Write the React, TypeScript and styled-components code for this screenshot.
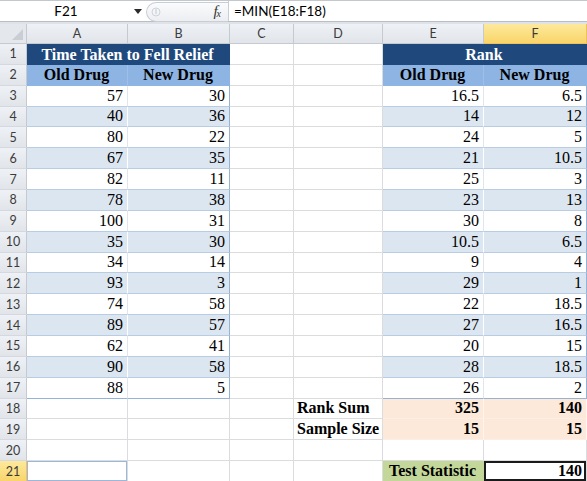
import React from "react";
import styled, { createGlobalStyle, css } from "styled-components";

const GlobalStyle = createGlobalStyle`
  html, body { margin: 0; padding: 0; background: #ffffff; }
  body { width: 587px; height: 481px; overflow: hidden; }
`;

const Page = styled.div`
  width: 587px;
  height: 481px;
  overflow: hidden;
  background: #dfe3e8;
  display: flex;
  flex-direction: column;
`;

const FormulaBar = styled.div`
  display: flex;
  align-items: stretch;
  height: 20px;
  border-top: 1px solid #c3c8cf;
  border-bottom: 1px solid #b7bec8;
  background: #ffffff;
  font-family: Lato, "Liberation Sans", sans-serif;
  font-size: 13.5px;
  color: #000;
  flex: none;
`;

const NameBox = styled.div`
  width: 128px;
  display: flex;
  align-items: center;
  justify-content: center;
  padding-left: 2px;
`;

const DropButton = styled.div`
  width: 16px;
  display: flex;
  align-items: center;
  justify-content: center;
`;

const FxTray = styled.div`
  width: 82px;
  display: flex;
  align-items: center;
  background: #ffffff;
`;

const Pill = styled.div`
  flex: 1;
  height: 18px;
  margin-top: 1px;
  border: 1px solid #c9ced5;
  border-right: none;
  border-radius: 10px 0 0 10px;
  background: linear-gradient(#fafbfc, #eceef2);
  display: flex;
  align-items: center;
  justify-content: space-between;
  padding: 0 8px 0 4px;
`;

const Fx = styled.span`
  font-family: "Liberation Serif", serif;
  font-style: italic;
  font-size: 15px;
  color: #333;
  letter-spacing: -1px;
  sub {
    font-size: 10px;
    vertical-align: -1px;
  }
`;

const FormulaText = styled.div`
  flex: 1;
  display: flex;
  align-items: center;
  padding-left: 5px;
  border-left: 1px solid #c9ced5;
`;

const Gap = styled.div`
  height: 2px;
  flex: none;
  background: #dfe3e8;
`;

const Sheet = styled.div`
  display: grid;
  grid-template-columns: 27px 101px 102px 64px 89px 101px 103px;
  grid-template-rows: 20px;
  grid-auto-rows: 20.86px;
  background: #ffffff;
  flex: none;
`;

const headFill = css<{ $active?: boolean }>`
  background: ${(p) =>
    p.$active
      ? "linear-gradient(#fde99c, #f9d56a)"
      : "linear-gradient(#eef1f5, #e1e5ea)"};
  color: #3b3b3b;
  font-family: Lato, "Liberation Sans", sans-serif;
  font-size: 12.5px;
  display: flex;
  align-items: center;
  justify-content: center;
  box-sizing: border-box;
`;

const Corner = styled.div`
  background: #e4e8ed;
  border-right: 1px solid #c5cad1;
  border-bottom: 1px solid #c5cad1;
  position: relative;
  box-sizing: border-box;
  svg { position: absolute; right: 3px; bottom: 3px; }
`;

const ColHead = styled.div<{ $active?: boolean }>`
  ${headFill}
  border-right: 1px solid ${(p) => (p.$active ? "#f0c05a" : "#c5cad1")};
  border-bottom: 1px solid ${(p) => (p.$active ? "#f0c05a" : "#c5cad1")};
`;

const RowHead = styled.div<{ $active?: boolean }>`
  ${headFill}
  border-right: 1px solid ${(p) => (p.$active ? "#f0c05a" : "#c5cad1")};
  border-bottom: 1px solid ${(p) => (p.$active ? "#f0c05a" : "#d5d9df")};
`;

type Kind =
  | "plain"
  | "title"
  | "sub"
  | "odd"
  | "band"
  | "peach"
  | "green"
  | "active"
  | "marked";

const fills: Record<Kind, string> = {
  plain: "#ffffff",
  title: "#1f497d",
  sub: "#8db4e2",
  odd: "#ffffff",
  band: "#dce6f1",
  peach: "#fde9d9",
  green: "#c4d79b",
  active: "#ffffff",
  marked: "#ffffff",
};

const Cell = styled.div<{
  $kind: Kind;
  $span?: number;
  $align?: "left" | "center" | "right";
  $bold?: boolean;
  $edge?: "inner" | "outer";
  $last?: boolean;
}>`
  grid-column: span ${(p) => p.$span ?? 1};
  box-sizing: border-box;
  background: ${(p) => fills[p.$kind]};
  color: ${(p) => (p.$kind === "title" ? "#ffffff" : "#000000")};
  font-family: "Liberation Serif", "Times New Roman", serif;
  font-size: 16px;
  font-weight: ${(p) => (p.$bold ? 700 : 400)};
  line-height: 18px;
  white-space: nowrap;
  display: flex;
  align-items: flex-end;
  justify-content: ${(p) =>
    p.$align === "right" ? "flex-end" : p.$align === "center" ? "center" : "flex-start"};
  padding: 0 4px 1px 3px;
  border-right: 1px solid #dadcdd;
  border-bottom: 1px solid #dadcdd;
  position: relative;

  ${(p) =>
    (p.$kind === "odd" || p.$kind === "band") &&
    css`
      border-bottom-color: ${p.$last ? "#95b3d7" : "#b8cce4"};
      border-right-color: ${p.$edge === "outer"
        ? "#95b3d7"
        : p.$kind === "band"
        ? "#ffffff"
        : "#dfe6ef"};
    `}
  ${(p) =>
    p.$kind === "title" &&
    css`
      border-right-color: #1f497d;
      border-bottom-color: #1f497d;
      padding-bottom: 0;
    `}
  ${(p) =>
    p.$kind === "sub" &&
    css`
      border-right-color: ${p.$edge === "outer" ? "#8db4e2" : "#9fc0e6"};
      border-bottom-color: #8db4e2;
    `}
  ${(p) =>
    p.$kind === "peach" &&
    css`
      border-right-color: #fff4ee;
      border-bottom-color: #fbeee6;
    `}
  ${(p) =>
    p.$kind === "green" &&
    css`
      border-right-color: #c4d79b;
      border-bottom-color: #c4d79b;
    `}
  ${(p) =>
    p.$kind === "active" &&
    css`
      box-shadow: inset 0 0 0 2px #1a1a1a;
      padding-right: 4px;
      padding-bottom: 1px;
    `}
  ${(p) =>
    p.$kind === "marked" &&
    css`
      box-shadow: inset 0 0 0 1px #9cb7dc;
    `}
`;

const oldDrug = [57, 40, 80, 67, 82, 78, 100, 35, 34, 93, 74, 89, 62, 90, 88];
const newDrug = [30, 36, 22, 35, 11, 38, 31, 30, 14, 3, 58, 57, 41, 58, 5];
const rankOld = ["16.5", "14", "24", "21", "25", "23", "30", "10.5", "9", "29", "22", "27", "20", "28", "26"];
const rankNew = ["6.5", "12", "5", "10.5", "3", "13", "8", "6.5", "4", "1", "18.5", "16.5", "15", "18.5", "2"];

const cols = ["A", "B", "C", "D", "E", "F"];

export default function App() {
  return (
    <>
      <GlobalStyle />
      <Page>
        <FormulaBar>
          <NameBox>F21</NameBox>
          <DropButton>
            <svg width="8" height="5" viewBox="0 0 8 5">
              <path d="M0 0 H8 L4 5 Z" fill="#2b2b2b" />
            </svg>
          </DropButton>
          <FxTray>
            <Pill>
              <svg width="10" height="12" viewBox="0 0 10 12">
                <circle cx="5" cy="6" r="4" fill="none" stroke="#cfd3d9" strokeWidth="1" />
                <path d="M5 3 V8" stroke="#c3c8cf" strokeWidth="1" />
              </svg>
              <Fx>
                f<sub>x</sub>
              </Fx>
            </Pill>
          </FxTray>
          <FormulaText>=MIN(E18:F18)</FormulaText>
        </FormulaBar>
        <Gap />
        <Sheet>
          <Corner>
            <svg width="11" height="11" viewBox="0 0 11 11">
              <path d="M11 0 V11 H0 Z" fill="#c9ced5" />
            </svg>
          </Corner>
          {cols.map((c) => (
            <ColHead key={c} $active={c === "F"}>
              {c}
            </ColHead>
          ))}

          <RowHead>1</RowHead>
          <Cell $kind="title" $span={2} $align="center" $bold>
            Time Taken to Fell Relief
          </Cell>
          <Cell $kind="plain" />
          <Cell $kind="plain" />
          <Cell $kind="title" $span={2} $align="center" $bold>
            Rank
          </Cell>

          <RowHead>2</RowHead>
          <Cell $kind="sub" $align="center" $bold>Old Drug</Cell>
          <Cell $kind="sub" $align="center" $bold $edge="outer">New Drug</Cell>
          <Cell $kind="plain" />
          <Cell $kind="plain" />
          <Cell $kind="sub" $align="center" $bold>Old Drug</Cell>
          <Cell $kind="sub" $align="center" $bold $edge="outer">New Drug</Cell>

          {oldDrug.map((v, i) => {
            const kind: Kind = i % 2 === 0 ? "odd" : "band";
            const last = i === oldDrug.length - 1;
            return (
              <React.Fragment key={i}>
                <RowHead>{i + 3}</RowHead>
                <Cell $kind={kind} $align="right" $last={last}>{v}</Cell>
                <Cell $kind={kind} $align="right" $edge="outer" $last={last}>{newDrug[i]}</Cell>
                <Cell $kind="plain" />
                <Cell $kind="plain" />
                <Cell $kind={kind} $align="right" $last={last}>{rankOld[i]}</Cell>
                <Cell $kind={kind} $align="right" $edge="outer" $last={last}>{rankNew[i]}</Cell>
              </React.Fragment>
            );
          })}

          <RowHead>18</RowHead>
          <Cell $kind="plain" />
          <Cell $kind="plain" />
          <Cell $kind="plain" />
          <Cell $kind="plain" $bold>Rank Sum</Cell>
          <Cell $kind="peach" $align="right" $bold>325</Cell>
          <Cell $kind="peach" $align="right" $bold>140</Cell>

          <RowHead>19</RowHead>
          <Cell $kind="plain" />
          <Cell $kind="plain" />
          <Cell $kind="plain" />
          <Cell $kind="plain" $bold>Sample Size</Cell>
          <Cell $kind="peach" $align="right" $bold>15</Cell>
          <Cell $kind="peach" $align="right" $bold>15</Cell>

          <RowHead>20</RowHead>
          <Cell $kind="plain" />
          <Cell $kind="plain" />
          <Cell $kind="plain" />
          <Cell $kind="plain" />
          <Cell $kind="plain" />
          <Cell $kind="plain" />

          <RowHead $active>21</RowHead>
          <Cell $kind="marked" />
          <Cell $kind="plain" />
          <Cell $kind="plain" />
          <Cell $kind="plain" />
          <Cell $kind="green" $align="center" $bold>Test Statistic</Cell>
          <Cell $kind="active" $align="right" $bold>140</Cell>
        </Sheet>
      </Page>
    </>
  );
}
